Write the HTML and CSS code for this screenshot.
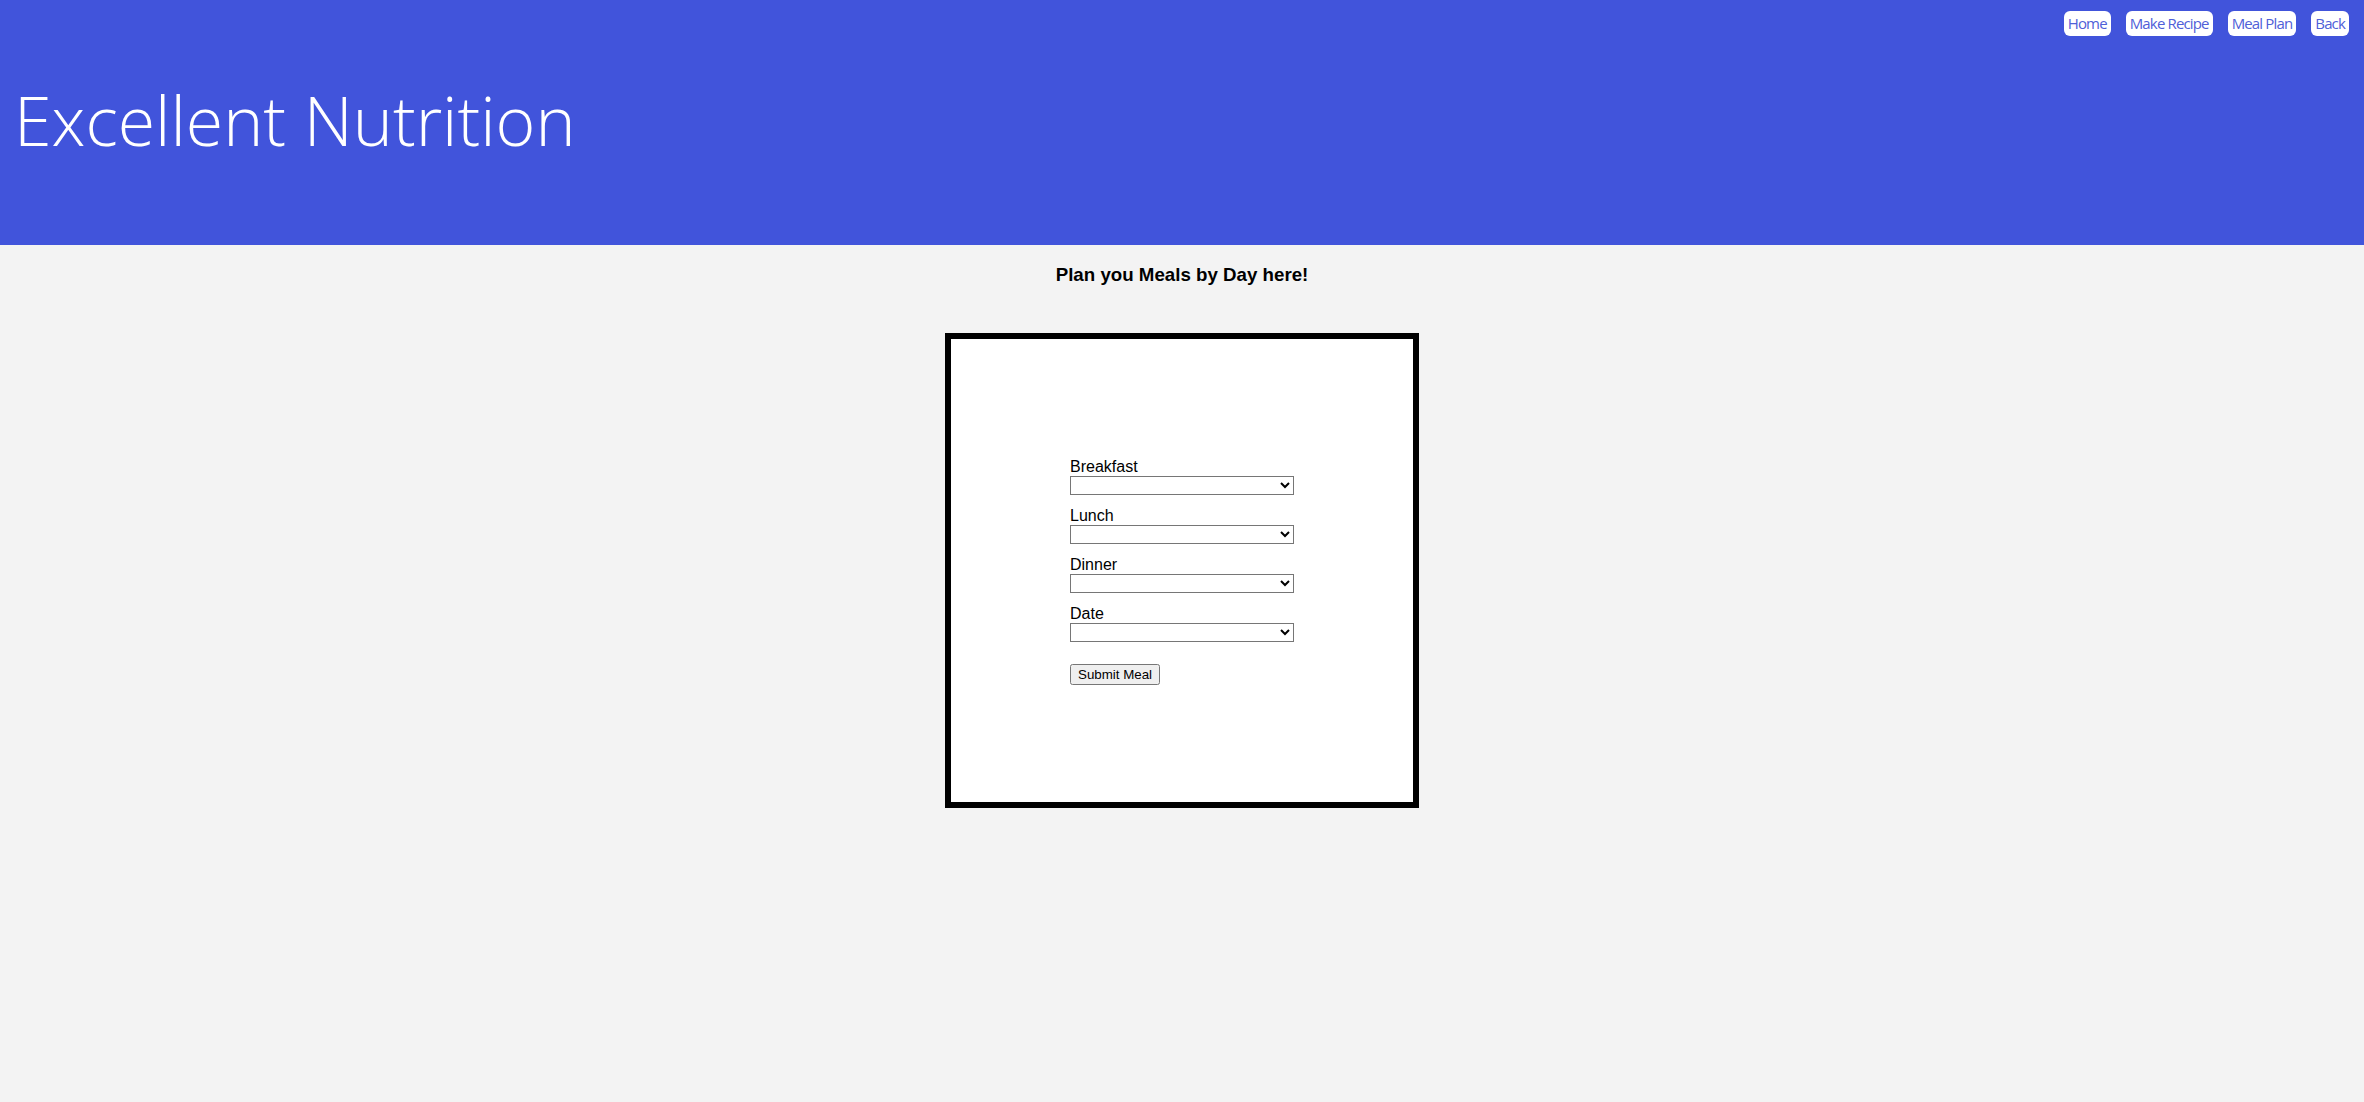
FILE: index.html
```html
<!DOCTYPE html>
<html lang="en">
<head>
<meta charset="utf-8">
<title>Excellent Nutrition - Meal Plan</title>
<link rel="stylesheet" href="styles.css">
</head>
<body>
<header class="site-header">
  <nav class="nav">
    <a class="nav-btn" href="#">Home</a>
    <a class="nav-btn" href="#">Make Recipe</a>
    <a class="nav-btn" href="#">Meal Plan</a>
    <a class="nav-btn" href="#">Back</a>
  </nav>
  <h1 class="title">Excellent Nutrition</h1>
</header>
<main class="main">
  <h3 class="subtitle">Plan you Meals by Day here!</h3>
  <div class="card">
    <form class="meal-form">
      <label class="field">
        <span class="field-label">Breakfast</span>
        <select class="field-select"><option></option></select>
      </label>
      <label class="field">
        <span class="field-label">Lunch</span>
        <select class="field-select"><option></option></select>
      </label>
      <label class="field">
        <span class="field-label">Dinner</span>
        <select class="field-select"><option></option></select>
      </label>
      <label class="field">
        <span class="field-label">Date</span>
        <select class="field-select"><option></option></select>
      </label>
      <button type="button" class="submit-btn">Submit Meal</button>
    </form>
  </div>
</main>
</body>
</html>
```
FILE: styles.css
```css
html, body {
  margin: 0;
  padding: 0;
}
body {
  background: #f3f3f3;
  font-family: "Liberation Sans", Arial, sans-serif;
  color: #000;
  min-height: 1102px;
}
.site-header {
  background: #4154db;
  height: 245px;
  box-sizing: border-box;
  padding: 11px 15px 0 14px;
}
.nav {
  display: flex;
  justify-content: flex-end;
  gap: 15px;
}
.nav-btn {
  display: block;
  background: #fff;
  color: #4f60d8;
  text-decoration: none;
  font-family: "Open Sans", "Noto Sans", sans-serif;
  font-size: 15px;
  letter-spacing: -0.85px;
  line-height: 25px;
  height: 25px;
  padding: 0 4px;
  border-radius: 6px;
}
.title {
  margin: 44px 0 0 0;
  font-family: "Open Sans", "Noto Sans", sans-serif;
  font-weight: 300;
  font-size: 68px;
  line-height: 80px;
  color: #fff;
}
.main {
  display: flex;
  flex-direction: column;
  align-items: center;
}
.subtitle {
  margin: 18px 0 0 0;
  font-size: 18.72px;
  line-height: 24px;
  font-weight: bold;
}
.card {
  margin-top: 46px;
  width: 462px;
  height: 463px;
  border: 6px solid #000;
  background: #fff;
  display: flex;
  align-items: center;
  justify-content: center;
}
.meal-form {
  display: flex;
  flex-direction: column;
  width: 224px;
  padding-top: 2px;
}
.field {
  display: flex;
  flex-direction: column;
  margin-bottom: 12px;
}
.field-label {
  font-size: 16px;
  line-height: 18px;
}
.field-select {
  width: 224px;
  height: 19px;
  margin: 0;
  font-size: 13.33px;
  background: #fff;
}
.submit-btn {
  margin-top: 10px;
  align-self: flex-start;
  height: 21px;
  white-space: nowrap;
  font-family: "Liberation Sans", Arial, sans-serif;
  font-size: 13.33px;
  padding: 0 6px;
}
```
